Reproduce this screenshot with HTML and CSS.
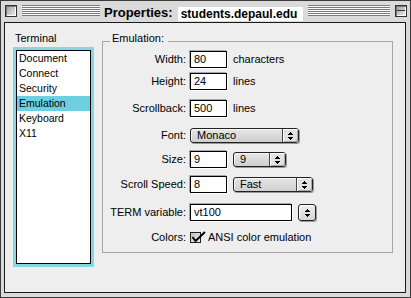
FILE: index.html
```html
<!DOCTYPE html>
<html lang="en">
<head>
    <meta charset="UTF-8">
    <meta name="viewport" content="width=device-width, initial-scale=1.0">
    <title>Properties: students.depaul.edu</title>
    <link rel="stylesheet" href="styles.css">
</head>
<body>
    <div class="window">
        <div class="titlebar">
            <span class="close-box"></span>
            <span class="stripes stripes-left"></span>
            <span class="title">Properties:</span>
            <span class="host">students.depaul.edu</span>
            <span class="stripes stripes-right"></span>
            <span class="collapse-box"></span>
        </div>
        <div class="content">
            <div class="sidebar">
                <div class="caption">Terminal</div>
                <div class="list-focus">
                    <ul class="list">
                        <li>Document</li>
                        <li>Connect</li>
                        <li>Security</li>
                        <li class="selected">Emulation</li>
                        <li>Keyboard</li>
                        <li>X11</li>
                    </ul>
                </div>
            </div>
            <fieldset class="group">
                <legend>Emulation:</legend>
                <div class="row first">
                    <label>Width:</label>
                    <span class="field">80</span>
                    <span class="unit">characters</span>
                </div>
                <div class="row">
                    <label>Height:</label>
                    <span class="field">24</span>
                    <span class="unit">lines</span>
                </div>
                <div class="row wide">
                    <label>Scrollback:</label>
                    <span class="field">500</span>
                    <span class="unit">lines</span>
                </div>
                <div class="row wider">
                    <label>Font:</label>
                    <span class="popup popup-font">
                        <span class="popup-text">Monaco</span>
                        <span class="popup-arrows">
                            <svg width="5" height="8" viewBox="0 0 5 8" shape-rendering="crispEdges"><rect x="2" y="0" width="1" height="1"/><rect x="1" y="1" width="3" height="1"/><rect x="0" y="2" width="5" height="1"/><rect x="0" y="5" width="5" height="1"/><rect x="1" y="6" width="3" height="1"/><rect x="2" y="7" width="1" height="1"/></svg>
                        </span>
                    </span>
                </div>
                <div class="row mid">
                    <label>Size:</label>
                    <span class="field">9</span>
                    <span class="popup popup-size">
                        <span class="popup-text">9</span>
                        <span class="popup-arrows">
                            <svg width="5" height="8" viewBox="0 0 5 8" shape-rendering="crispEdges"><rect x="2" y="0" width="1" height="1"/><rect x="1" y="1" width="3" height="1"/><rect x="0" y="2" width="5" height="1"/><rect x="0" y="5" width="5" height="1"/><rect x="1" y="6" width="3" height="1"/><rect x="2" y="7" width="1" height="1"/></svg>
                        </span>
                    </span>
                </div>
                <div class="row mid">
                    <label>Scroll Speed:</label>
                    <span class="field">8</span>
                    <span class="popup popup-speed">
                        <span class="popup-text">Fast</span>
                        <span class="popup-arrows">
                            <svg width="5" height="8" viewBox="0 0 5 8" shape-rendering="crispEdges"><rect x="2" y="0" width="1" height="1"/><rect x="1" y="1" width="3" height="1"/><rect x="0" y="2" width="5" height="1"/><rect x="0" y="5" width="5" height="1"/><rect x="1" y="6" width="3" height="1"/><rect x="2" y="7" width="1" height="1"/></svg>
                        </span>
                    </span>
                </div>
                <div class="row wider">
                    <label>TERM variable:</label>
                    <span class="field field-wide">vt100</span>
                    <span class="arrow-button">
                        <svg width="5" height="8" viewBox="0 0 5 8" shape-rendering="crispEdges"><rect x="2" y="0" width="1" height="1"/><rect x="1" y="1" width="3" height="1"/><rect x="0" y="2" width="5" height="1"/><rect x="0" y="5" width="5" height="1"/><rect x="1" y="6" width="3" height="1"/><rect x="2" y="7" width="1" height="1"/></svg>
                    </span>
                </div>
                <div class="row wide">
                    <label>Colors:</label>
                    <span class="checkbox">
                        <svg width="17" height="13" viewBox="0 0 17 13">
                            <defs>
                                <linearGradient id="box" x1="0" y1="0" x2="1" y2="1">
                                    <stop offset="0" stop-color="#bdbdbd"/>
                                    <stop offset="1" stop-color="#f4f4f4"/>
                                </linearGradient>
                            </defs>
                            <rect x="0.5" y="1.5" width="10" height="10" fill="url(#box)" stroke="#222"/>
                            <polyline points="2.5,6 5.5,10 15,1" fill="none" stroke="#000" stroke-width="2"/>
                        </svg>
                    </span>
                    <span class="check-label">ANSI color emulation</span>
                </div>
            </fieldset>
        </div>
    </div>
</body>
</html>
```

FILE: styles.css
```css
body {
    margin: 0;
    font-family: "Liberation Sans", Arial, sans-serif;
    font-size: 11px;
    color: #000;
    background: #dadada;
}
.window {
    width: 411px;
    height: 298px;
    box-sizing: border-box;
    border: 1px solid #3c3c3c;
    background: #dadada;
    display: flex;
    flex-direction: column;
}

/* title bar */
.titlebar {
    height: 21px;
    box-sizing: border-box;
    padding: 4px 3px 0 4px;
    display: flex;
    align-items: flex-start;
}
.close-box, .collapse-box {
    width: 12px;
    height: 12px;
    box-sizing: border-box;
    border: 1px solid #333;
    background: linear-gradient(135deg, #9a9a9a, #f0f0f0);
    box-shadow: inset 1px 1px 0 #777, inset -1px -1px 0 #fff;
    flex: none;
}
.collapse-box {
    margin-left: 5px;
    background: linear-gradient(to bottom, transparent 4px, #333 4px, #333 5px, transparent 5px), linear-gradient(135deg, #9a9a9a, #f0f0f0);
}
.stripes {
    height: 11px;
    background: repeating-linear-gradient(to bottom, #7a7a7a 0, #7a7a7a 1px, #fbfbfb 1px, #fbfbfb 2px);
}
.stripes-left {
    width: 78px;
    margin-left: 5px;
    flex: none;
}
.stripes-right {
    flex: 1;
    margin-left: 5px;
}
.title {
    margin-left: 4px;
    font-weight: bold;
    font-size: 13px;
    line-height: 15px;
}
.host {
    margin-left: 5px;
    margin-top: 2px;
    padding: 0 6px 0 3px;
    background: #fff;
    font-weight: bold;
    font-size: 12px;
    line-height: 14px;
    height: 14px;
}

/* window body */
.content {
    flex: 1;
    margin: 0 4px 4px 3px;
    border: 1px solid #1a1a1a;
    background: #eeeeee;
    display: flex;
    align-items: flex-start;
}
.sidebar {
    margin: 9px 0 0 8px;
}
.caption {
    padding-left: 2px;
    line-height: 12px;
    margin-bottom: 3px;
}
.list-focus {
    width: 81px;
    height: 220px;
    box-sizing: border-box;
    border: 3px solid #86d6e4;
}
.list {
    list-style: none;
    margin: 0;
    padding: 0;
    height: 100%;
    box-sizing: border-box;
    border: 1px solid #000;
    background: #fff;
}
.list li {
    height: 15px;
    line-height: 15px;
    padding-left: 2px;
    font-size: 10.5px;
}
.list li.selected {
    background: #6dcfe0;
}

/* emulation group */
.group {
    flex: 1;
    min-width: 0;
    margin: 9px 12px 0 8px;
    padding: 0 0 8px 0;
    border: 1px solid #a6a6a6;
}
.group legend {
    margin-left: 7px;
    padding: 0 4px 7px 2px;
    line-height: 12px;
}
.row {
    display: flex;
    align-items: center;
    margin-top: 5px;
}
.row.first {
    margin-top: 0;
}
.row.mid {
    margin-top: 8px;
}
.row.wide {
    margin-top: 10px;
}
.row.wider {
    margin-top: 11px;
}
.row label {
    width: 83px;
    flex: none;
    margin-right: 4px;
    text-align: right;
    line-height: 13px;
}
.field {
    width: 37px;
    height: 17px;
    box-sizing: border-box;
    border: 1px solid #000;
    background: #fff;
    padding-left: 3px;
    line-height: 15px;
    box-shadow: -1px -1px 0 #a8a8a8, 1px 1px 0 #fff;
    flex: none;
}
.field-wide {
    width: 102px;
}
.unit {
    margin-left: 6px;
    line-height: 13px;
}

/* popup menus */
.popup {
    display: flex;
    height: 15px;
    box-sizing: border-box;
    border: 1px solid #222;
    border-radius: 3px;
    background: linear-gradient(#e6e6e6, #cfcfcf);
    box-shadow: 1px 1px 0 #999, inset 1px 1px 0 #f6f6f6;
    flex: none;
}
.popup-font {
    width: 109px;
}
.popup-size {
    width: 53px;
    margin-left: 6px;
}
.popup-speed {
    width: 80px;
    margin-left: 6px;
}
.popup-text {
    flex: 1;
    padding-left: 6px;
    line-height: 13px;
}
.popup-arrows {
    width: 15px;
    border-left: 1px solid #444;
    border-radius: 0 2px 2px 0;
    background: #e2e2e2;
    box-shadow: inset 1px 1px 0 #fff, inset -1px -1px 0 #aaa;
    display: flex;
    align-items: center;
    justify-content: center;
}
.arrow-button {
    width: 18px;
    height: 17px;
    box-sizing: border-box;
    margin-left: 6px;
    border: 1px solid #222;
    border-radius: 3px;
    background: linear-gradient(#eeeeee, #d4d4d4);
    box-shadow: 1px 1px 0 #999, inset 1px 1px 0 #fff;
    display: flex;
    align-items: center;
    justify-content: center;
}
.checkbox {
    display: flex;
    margin-left: 0;
}
.check-label {
    margin-left: 1px;
    line-height: 13px;
}
```
